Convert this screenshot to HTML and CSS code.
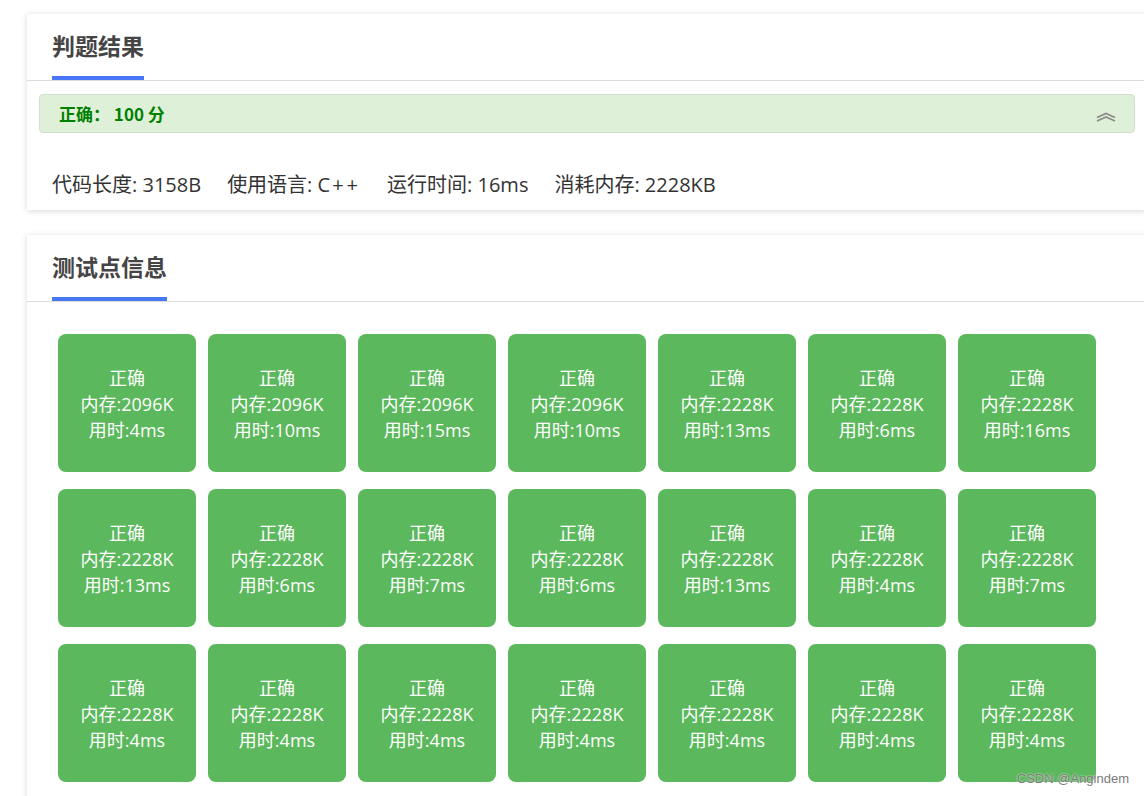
FILE: index.html
```html
<!DOCTYPE html>
<html lang="zh-CN">
<head>
<meta charset="utf-8">
<title>判题结果</title>
<link rel="stylesheet" href="styles.css">
</head>
<body>
<div class="page">
  <section class="card">
    <div class="card-head"><span class="tab">判题结果</span></div>
    <div class="card-body result-body">
      <div class="verdict">
        <span class="verdict-text">正确：&nbsp;100 分</span>
        <svg class="chev" width="20" height="10" viewBox="0 0 20 10">
          <path d="M1 5.5 L10 1.5 L19 5.5" fill="none" stroke="#8a8a8a" stroke-width="1.6"/>
          <path d="M1 9 L10 5 L19 9" fill="none" stroke="#8a8a8a" stroke-width="1.6"/>
        </svg>
      </div>
      <div class="stats">
        <span class="stat">代码长度: 3158B</span>
        <span class="stat">使用语言: C<span class="plus">++</span></span>
        <span class="stat">运行时间: 16ms</span>
        <span class="stat">消耗内存: 2228KB</span>
      </div>
    </div>
  </section>

  <section class="card card-tests">
    <div class="card-head"><span class="tab">测试点信息</span></div>
    <div class="card-body tests-body">
      <div class="grid">
        <div class="tile"><span>正确</span><span>内存:2096K</span><span>用时:4ms</span></div>
        <div class="tile"><span>正确</span><span>内存:2096K</span><span>用时:10ms</span></div>
        <div class="tile"><span>正确</span><span>内存:2096K</span><span>用时:15ms</span></div>
        <div class="tile"><span>正确</span><span>内存:2096K</span><span>用时:10ms</span></div>
        <div class="tile"><span>正确</span><span>内存:2228K</span><span>用时:13ms</span></div>
        <div class="tile"><span>正确</span><span>内存:2228K</span><span>用时:6ms</span></div>
        <div class="tile"><span>正确</span><span>内存:2228K</span><span>用时:16ms</span></div>

        <div class="tile"><span>正确</span><span>内存:2228K</span><span>用时:13ms</span></div>
        <div class="tile"><span>正确</span><span>内存:2228K</span><span>用时:6ms</span></div>
        <div class="tile"><span>正确</span><span>内存:2228K</span><span>用时:7ms</span></div>
        <div class="tile"><span>正确</span><span>内存:2228K</span><span>用时:6ms</span></div>
        <div class="tile"><span>正确</span><span>内存:2228K</span><span>用时:13ms</span></div>
        <div class="tile"><span>正确</span><span>内存:2228K</span><span>用时:4ms</span></div>
        <div class="tile"><span>正确</span><span>内存:2228K</span><span>用时:7ms</span></div>

        <div class="tile"><span>正确</span><span>内存:2228K</span><span>用时:4ms</span></div>
        <div class="tile"><span>正确</span><span>内存:2228K</span><span>用时:4ms</span></div>
        <div class="tile"><span>正确</span><span>内存:2228K</span><span>用时:4ms</span></div>
        <div class="tile"><span>正确</span><span>内存:2228K</span><span>用时:4ms</span></div>
        <div class="tile"><span>正确</span><span>内存:2228K</span><span>用时:4ms</span></div>
        <div class="tile"><span>正确</span><span>内存:2228K</span><span>用时:4ms</span></div>
        <div class="tile"><span>正确</span><span>内存:2228K</span><span>用时:4ms</span></div>
      </div>
    </div>
  </section>
</div>
<div class="watermark">CSDN @Angindem</div>
</body>
</html>
```

FILE: styles.css
```css
html, body {
  margin: 0;
  padding: 0;
  background: #ffffff;
  overflow: hidden;
  height: 796px;
}

body {
  font-family: "Open Sans", "Noto Sans CJK SC", sans-serif;
  color: #333;
  position: relative;
}

.page {
  padding: 14px 0 0 27px;
}

.card {
  width: 1120px;
  background: #fff;
  box-shadow: 0 1px 6px rgba(0, 0, 0, 0.16);
}

.card-tests {
  margin-top: 25px;
  height: 700px;
}

.card-head {
  padding: 0 25px;
  border-bottom: 1px solid #dcdcdc;
  display: flex;
}

.tab {
  display: block;
  padding-top: 15px;
  padding-bottom: 15px;
  line-height: 32px;
  font-size: 23px;
  font-weight: 700;
  color: #454545;
  border-bottom: 4px solid #4877f5;
  font-family: "Noto Sans CJK SC", sans-serif;
}

.result-body {
  padding: 13px 12px 12px;
}

.verdict {
  height: 39px;
  box-sizing: border-box;
  background: #dff0d8;
  border: 1px solid #d2dfcc;
  border-radius: 4px;
  display: flex;
  align-items: center;
  justify-content: space-between;
  padding: 0 18px 0 19px;
}

.verdict-text {
  font-family: "Noto Sans CJK SC", sans-serif;
  font-size: 17px;
  font-weight: 700;
  color: #008000;
}

.chev {
  display: block;
  margin-top: 6px;
}

.stats {
  margin-top: 39px;
  padding-left: 13px;
  line-height: 26px;
  font-size: 20px;
  color: #333;
  display: flex;
  gap: 26px;
}

.plus {
  letter-spacing: 3px;
  margin-left: 2px;
}

.tests-body {
  padding: 32px 31px;
}

.grid {
  display: grid;
  grid-template-columns: repeat(7, 138px);
  column-gap: 12px;
  row-gap: 17px;
}

.tile {
  height: 138px;
  box-sizing: border-box;
  padding-top: 2px;
  background: #5cb85c;
  border-radius: 8px;
  color: #fff;
  font-size: 18px;
  line-height: 26px;
  display: flex;
  flex-direction: column;
  align-items: center;
  justify-content: center;
}

.watermark {
  position: absolute;
  right: 15px;
  top: 771px;
  font-family: "Liberation Sans", sans-serif;
  font-size: 13px;
  color: #7a7a7a;
  text-shadow: 0 0 2px #fff;
}
```
